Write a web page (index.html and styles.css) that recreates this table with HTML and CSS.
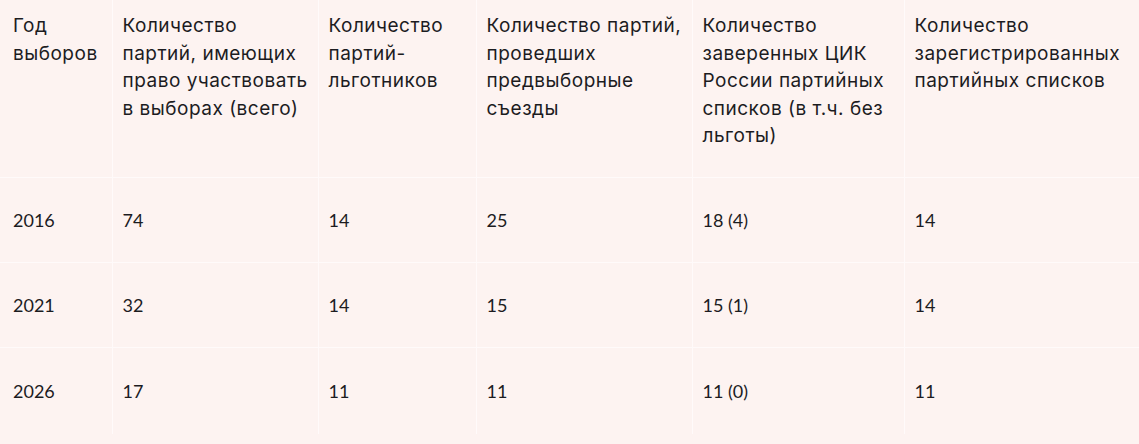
FILE: index.html
```html
<!DOCTYPE html>
<html lang="ru">
<head>
<meta charset="utf-8">
<link rel="stylesheet" href="styles.css">
</head>
<body>
<table class="data">
  <colgroup>
    <col class="c1"><col class="c2"><col class="c3"><col class="c4"><col class="c5"><col class="c6">
  </colgroup>
  <thead>
    <tr class="head">
      <th>Год выборов</th>
      <th>Количество партий, имеющих право участвовать в выборах (всего)</th>
      <th>Количество партий-льготников</th>
      <th>Количество партий, проведших предвыборные съезды</th>
      <th>Количество заверенных ЦИК России партийных списков (в т.ч. без льготы)</th>
      <th>Количество зарегистрированных партийных списков</th>
    </tr>
  </thead>
  <tbody>
    <tr><td>2016</td><td>74</td><td>14</td><td>25</td><td>18 (4)</td><td>14</td></tr>
    <tr><td>2021</td><td>32</td><td>14</td><td>15</td><td>15 (1)</td><td>14</td></tr>
    <tr><td>2026</td><td>17</td><td>11</td><td>11</td><td>11 (0)</td><td>11</td></tr>
  </tbody>
</table>
</body>
</html>
```

FILE: styles.css
```css
html, body {
  margin: 0;
  padding: 0;
  background: #fdf3f1;
}
.data {
  width: 1139px;
  border-collapse: collapse;
  table-layout: fixed;
  background: #fdf3f1;
  color: #1c1c1f;
}
.c1 { width: 112px; }
.c2 { width: 206px; }
.c3 { width: 158px; }
.c4 { width: 216px; }
.c5 { width: 212px; }
.c6 { width: 235px; }
.data th, .data td {
  border: 1px solid #fffafa;
  text-align: left;
  padding: 0 3px 0 10px;
}
.data th:first-child, .data td:first-child { padding-left: 13px; }
.data tr:first-child th { border-top: none; }
.data th:first-child, .data td:first-child { border-left: none; }
.data th:last-child, .data td:last-child { border-right: none; }
.data th {
  font-family: Inter, "Noto Sans", sans-serif;
  font-weight: 400;
  font-size: 19px;
  letter-spacing: 0.5px;
  line-height: 27.5px;
  vertical-align: top;
  padding-top: 12px;
  height: 165px;
}
.data td {
  font-family: Lato, "Noto Sans", sans-serif;
  font-size: 18px;
  line-height: 24px;
  vertical-align: middle;
  height: 84px;
}
.data tbody tr:last-child td { height: 86px; border-bottom: none; }
```
